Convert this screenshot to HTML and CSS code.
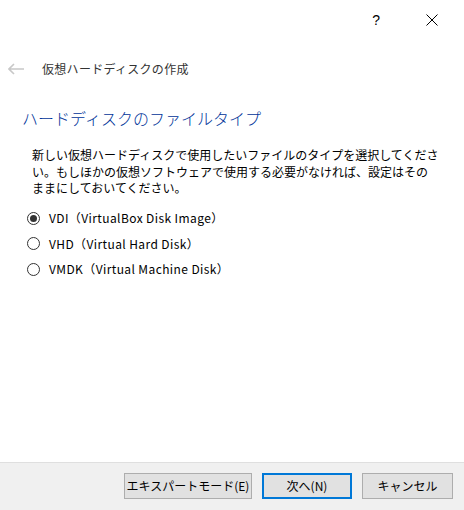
FILE: index.html
```html
<!DOCTYPE html>
<html lang="ja">
<head>
<meta charset="utf-8">
<link rel="stylesheet" href="styles.css">
</head>
<body>
<div class="window">
  <div class="titlebar">
    <span class="help">?</span>
    <svg class="close" width="12" height="12" viewBox="0 0 12 12"><path d="M0.5 0.5 L11.5 11.5 M11.5 0.5 L0.5 11.5" stroke="#000" stroke-width="1"/></svg>
  </div>
  <div class="main">
    <div class="header">
      <svg class="back" width="16" height="12" viewBox="0 0 16 12"><path d="M1 6 H16 M6 1 L1 6 L6 11" stroke="#c8c8c8" stroke-width="1.6" fill="none"/></svg>
      <span class="header-text">仮想ハードディスクの作成</span>
    </div>
    <h1 class="title">ハードディスクのファイルタイプ</h1>
    <p class="desc">新しい仮想ハードディスクで使用したいファイルのタイプを選択してくださ<br>い。もしほかの仮想ソフトウェアで使用する必要がなければ、設定はその<br>ままにしておいてください。</p>
    <div class="options">
      <div class="option"><span class="radio checked"></span><span class="label">VDI（VirtualBox Disk Image）</span></div>
      <div class="option"><span class="radio"></span><span class="label">VHD（Virtual Hard Disk）</span></div>
      <div class="option"><span class="radio"></span><span class="label">VMDK（Virtual Machine Disk）</span></div>
    </div>
  </div>
  <div class="footer">
    <button class="btn btn-expert">エキスパートモード(E)</button>
    <button class="btn btn-next default">次へ(N)</button>
    <button class="btn btn-cancel">キャンセル</button>
  </div>
</div>
</body>
</html>
```
FILE: styles.css
```css
html, body {
  margin: 0;
  padding: 0;
  background: #fff;
}
body {
  font-family: "Noto Sans CJK JP", "Liberation Sans", sans-serif;
  font-size: 12px;
  color: #000;
}
.window {
  width: 464px;
  height: 510px;
  display: flex;
  flex-direction: column;
}
.titlebar {
  height: 40px;
  display: flex;
  align-items: center;
  justify-content: flex-end;
  padding-right: 26px;
  gap: 46px;
  box-sizing: border-box;
}
.help {
  font-family: "Liberation Sans", sans-serif;
  font-size: 14px;
  line-height: 16px;
  color: #000;
  margin-top: -1px;
}
.close {
  display: block;
  margin-top: -1px;
}
.main {
  flex: 1;
}
.header {
  display: flex;
  align-items: center;
  height: 24px;
  margin-top: 17px;
  padding-left: 8px;
}
.back {
  display: block;
}
.header-text {
  margin-left: 18px;
  color: #333;
  font-size: 12px;
  line-height: 16px;
  letter-spacing: 0.3px;
}
.title {
  margin: 27px 0 0 22px;
  font-size: 16px;
  font-weight: 300;
  line-height: 20px;
  color: #003399;
}
.desc {
  margin: 19px 0 0 32px;
  font-size: 12px;
  line-height: 16.5px;
  white-space: nowrap;
  color: #000;
}
.options {
  margin: 9px 0 0 27px;
  display: flex;
  flex-direction: column;
}
.option {
  display: flex;
  align-items: center;
  height: 25.5px;
}
.radio {
  width: 13px;
  height: 13px;
  box-sizing: border-box;
  border: 1px solid #333;
  border-radius: 50%;
  position: relative;
  background: #fff;
}
.radio.checked::after {
  content: "";
  position: absolute;
  left: 2px;
  top: 2px;
  width: 7px;
  height: 7px;
  border-radius: 50%;
  background: #333;
}
.label {
  margin-left: 9px;
  font-size: 12px;
  line-height: 16px;
  letter-spacing: 0.4px;
  color: #000;
}
.footer {
  height: 48px;
  box-sizing: border-box;
  background: #f0f0f0;
  border-top: 1px solid #dfdfdf;
  display: flex;
  justify-content: flex-end;
  align-items: flex-start;
  gap: 10px;
  padding: 10px 11px 0 0;
}
.btn {
  height: 26px;
  box-sizing: border-box;
  background: #e1e1e1;
  border: 1px solid #adadad;
  font-family: "Noto Sans CJK JP", "Liberation Sans", sans-serif;
  font-size: 12px;
  line-height: 16px;
  color: #000;
  padding: 0;
  margin: 0;
}
.btn-expert { width: 128px; }
.btn-next { width: 90px; }
.btn-cancel { width: 91px; }
.btn.default {
  border: 2px solid #0078d7;
}
```
